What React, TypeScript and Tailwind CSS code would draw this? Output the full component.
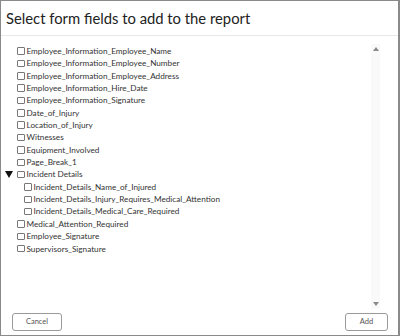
import React from "react";

type Field = { label: string; level: number; group?: boolean };

const fields: Field[] = [
  { label: "Employee_Information_Employee_Name", level: 0 },
  { label: "Employee_Information_Employee_Number", level: 0 },
  { label: "Employee_Information_Employee_Address", level: 0 },
  { label: "Employee_Information_Hire_Date", level: 0 },
  { label: "Employee_Information_Signature", level: 0 },
  { label: "Date_of_Injury", level: 0 },
  { label: "Location_of_Injury", level: 0 },
  { label: "Witnesses", level: 0 },
  { label: "Equipment_Involved", level: 0 },
  { label: "Page_Break_1", level: 0 },
  { label: "Incident Details", level: 0, group: true },
  { label: "Incident_Details_Name_of_Injured", level: 1 },
  { label: "Incident_Details_Injury_Requires_Medical_Attention", level: 1 },
  { label: "Incident_Details_Medical_Care_Required", level: 1 },
  { label: "Medical_Attention_Required", level: 0 },
  { label: "Employee_Signature", level: 0 },
  { label: "Supervisors_Signature", level: 0 },
];

function FieldRow({ field }: { field: Field }) {
  return (
    <div className={`relative flex items-center h-[12.35px] ${field.level ? "pl-[23px]" : "pl-[16px]"}`}>
      {field.group && (
        <svg className="absolute left-[4px] top-[3px]" width="8" height="7" viewBox="0 0 8 7">
          <path d="M0 0 L8 0 L4 7 Z" fill="#111" />
        </svg>
      )}
      <span className="w-[7.5px] h-[7.5px] border border-[#777] rounded-[1px] bg-white shrink-0" />
      <span className="ml-[2px] text-[8.2px] text-[#333] whitespace-nowrap">{field.label}</span>
    </div>
  );
}

export default function App() {
  return (
    <div
      className="w-[400px] h-[336px] bg-white border border-r-2 border-[#8a8a8a] flex flex-col"
      style={{ fontFamily: "Lato, \"Open Sans\", sans-serif" }}
    >
      {/* Header */}
      <div className="h-[35px] shrink-0 border-b border-[#e8e8e8] px-[5px] flex items-center">
        <h1 className="text-[14.8px] text-[#222] leading-none">Select form fields to add to the report</h1>
      </div>

      {/* Body */}
      <div className="flex-1 flex min-h-0">
        <div className="flex-1 pt-[9px]">
          {fields.map((f) => (
            <FieldRow key={f.label} field={f} />
          ))}
        </div>
        <div className="w-[9px] mr-[18px] mt-[8px] mb-[4px] bg-[#f9f9f9] flex flex-col items-center justify-between py-[3px]">
          <svg width="6" height="4" viewBox="0 0 6 4">
            <path d="M3 0 L6 4 L0 4 Z" fill="#8a8a8a" />
          </svg>
          <svg width="6" height="4" viewBox="0 0 6 4">
            <path d="M0 0 L6 0 L3 4 Z" fill="#8a8a8a" />
          </svg>
        </div>
      </div>

      {/* Footer */}
      <div className="h-[22px] shrink-0 flex items-start justify-between pl-[11px] pr-[10px]">
        <button className="w-[50px] h-[18px] border border-[#9a9a9a] rounded-[3px] bg-white text-[7.5px] text-[#555]">
          Cancel
        </button>
        <button className="w-[43px] h-[18px] border border-[#9a9a9a] rounded-[3px] bg-white text-[7.5px] text-[#555]">
          Add
        </button>
      </div>
    </div>
  );
}
